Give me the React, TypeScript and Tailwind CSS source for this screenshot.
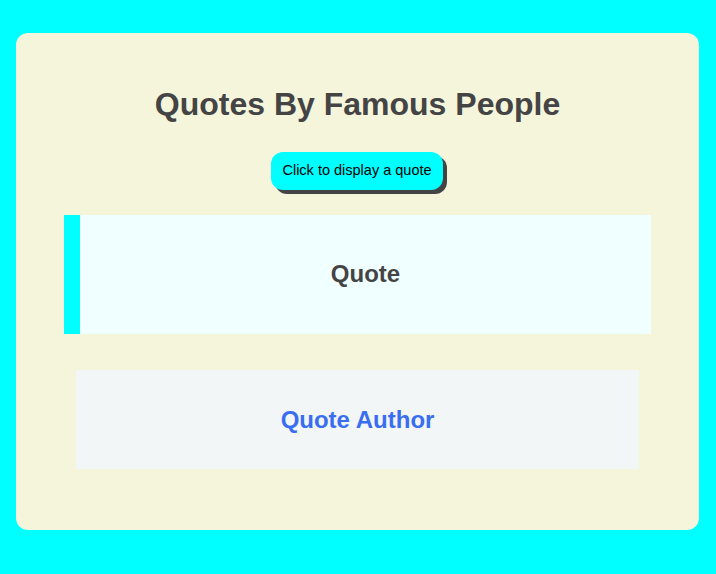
export default function App() {
  return (
    <div className="min-h-[574px] bg-[#00ffff] pt-[33px] pb-[44px] font-['Liberation_Sans',Arial,sans-serif]">
      <div className="mx-4 flex h-[497px] w-[683px] flex-col items-center rounded-[12px] bg-[#f5f5dc] pt-[53px]">
        <h1 className="text-[32px] font-bold leading-[37px] text-[#444444]">Quotes By Famous People</h1>
        <button className="mt-[29px] mr-[1px] h-[38px] w-[172px] rounded-[12px] bg-[#00ffff] text-[14.5px] text-black shadow-[4px_4px_0_#444444]">
          Click to display a quote
        </button>
        <div className="mt-[25px] flex h-[119px] w-[587px] items-center justify-center border-l-[16px] border-[#00ffff] bg-[#f0ffff] pb-[1px]">
          <p className="text-[24px] font-bold text-[#444444]">Quote</p>
        </div>
        <div className="mt-[36px] flex h-[99px] w-[563px] items-center justify-center bg-[#f2f6f6]">
          <p className="text-[24px] font-bold text-[#3a6ef0]">Quote Author</p>
        </div>
      </div>
    </div>
  );
}
